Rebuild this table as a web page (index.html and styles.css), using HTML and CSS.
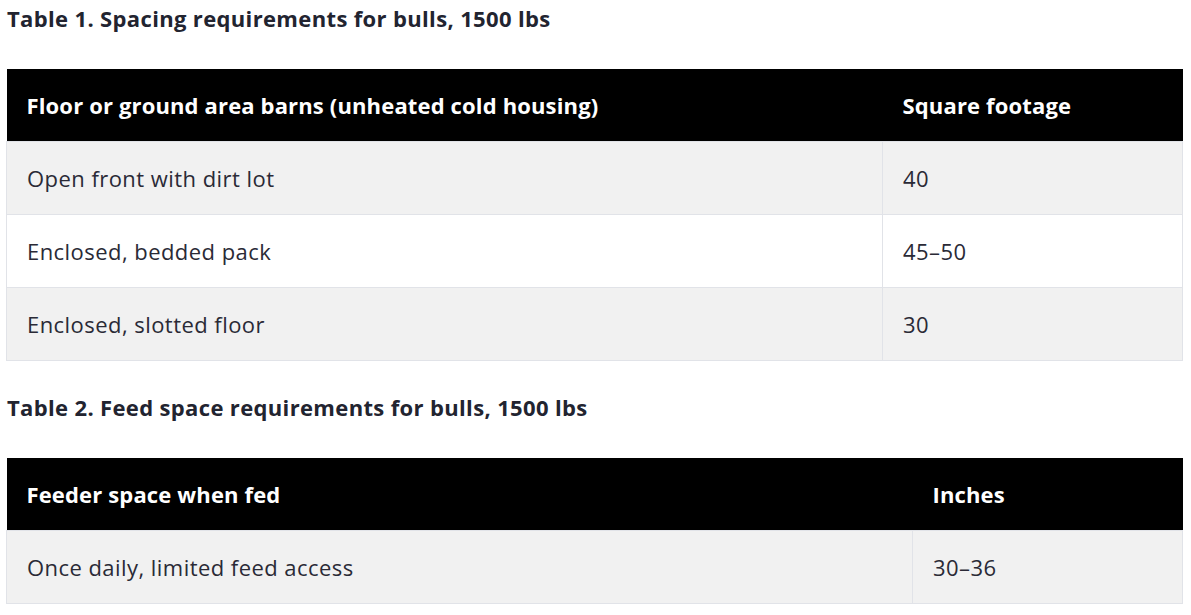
FILE: index.html
```html
<!DOCTYPE html>
<html lang="en">
<head>
<meta charset="utf-8">
<title>Bull spacing tables</title>
<link rel="stylesheet" href="styles.css">
</head>
<body>
<main class="content">
  <p class="caption">Table 1. Spacing requirements for bulls, 1500 lbs</p>
  <table class="data-table t1">
    <thead>
      <tr><th class="col-a">Floor or ground area barns (unheated cold housing)</th><th>Square footage</th></tr>
    </thead>
    <tbody>
      <tr><td>Open front with dirt lot</td><td>40</td></tr>
      <tr><td>Enclosed, bedded pack</td><td>45–50</td></tr>
      <tr><td>Enclosed, slotted floor</td><td>30</td></tr>
    </tbody>
  </table>
  <p class="caption">Table 2. Feed space requirements for bulls, 1500 lbs</p>
  <table class="data-table t2">
    <thead>
      <tr><th class="col-a">Feeder space when fed</th><th>Inches</th></tr>
    </thead>
    <tbody>
      <tr><td>Once daily, limited feed access</td><td>30–36</td></tr>
    </tbody>
  </table>
</main>
</body>
</html>
```

FILE: styles.css
```css
html, body {
  margin: 0;
  padding: 0;
  background: #ffffff;
}

body {
  font-family: "Open Sans", Lato, sans-serif;
  color: #262633;
}

.content {
  padding: 0 8px 0 6px;
}

.caption {
  margin: 0 0 32px 0;
  padding-left: 1px;
  font-size: 22px;
  line-height: 37px;
  font-weight: 700;
  letter-spacing: 0.35px;
  color: #222430;
}

.data-table {
  width: 100%;
  border-collapse: collapse;
  margin-bottom: 28px;
  font-size: 22px;
}

.data-table th,
.data-table td {
  text-align: left;
  vertical-align: middle;
  padding: 20px 20px;
  line-height: 32px;
}

.data-table th {
  background: #000000;
  color: #ffffff;
  font-weight: 700;
  letter-spacing: 0.15px;
  border: 0;
  padding-left: 20px;
}

.data-table td {
  border: 1px solid #e1e3e8;
  color: #2a2a36;
  letter-spacing: 0.45px;
}

.data-table tbody tr:nth-child(odd) td {
  background: #f1f1f1;
}

.data-table tbody tr:nth-child(even) td {
  background: #ffffff;
}

.t1 .col-a {
  width: 876px;
  box-sizing: border-box;
}

.t2 .col-a {
  width: 906px;
  box-sizing: border-box;
}
```
